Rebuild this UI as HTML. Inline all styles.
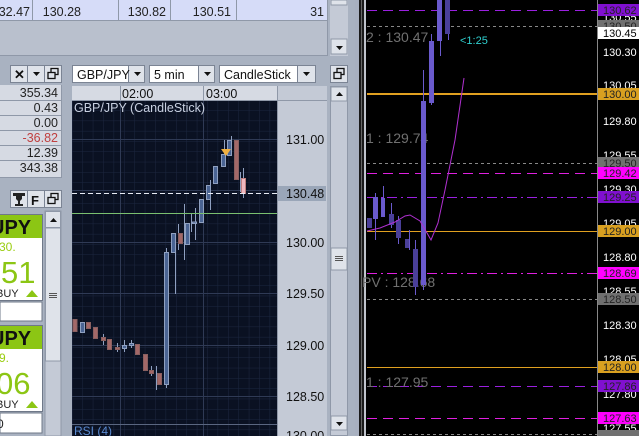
<!DOCTYPE html>
<html><head><meta charset="utf-8"><style>
html,body{margin:0;padding:0;background:#a9b2c1;width:639px;height:436px;overflow:hidden}
svg{display:block}
text{font-family:"Liberation Sans",sans-serif}
</style></head><body>
<svg width="639" height="436" viewBox="0 0 639 436" xmlns="http://www.w3.org/2000/svg">
<defs>
<pattern id="g" x="72" y="100" width="10.4" height="10.3" patternUnits="userSpaceOnUse">
<path d="M0 0H10.4M0 0V10.3" stroke="#1c2640" stroke-width="1" fill="none"/>
</pattern>
</defs>
<rect x="0" y="0" width="355" height="436" fill="#a9b2c1"/>
<rect x="0" y="0" width="327" height="56" fill="#b9c0cd"/>
<rect x="0" y="0" width="327" height="20" fill="#d6dcf8"/>
<path d="M0 20.5H327M32.5 0V20M118.5 0V20M170.5 0V20M236.5 0V20" stroke="#8f98a8"/>
<path d="M327.5 0V56M0 55.5H327" stroke="#8f98a8"/>
<g font-size="12.5" fill="#222" text-anchor="end">
<text x="30" y="16">32.47</text><text x="81" y="16">130.28</text><text x="166" y="16">130.82</text><text x="231" y="16">130.51</text><text x="324" y="16">31</text>
</g>
<rect x="330" y="0" width="18" height="56" fill="#c4cad6"/>
<rect x="331" y="39" width="16" height="15" fill="#dfe3ea" stroke="#8f98a8"/>
<rect x="331" y="0" width="16" height="5" fill="#dfe3ea" stroke="#8f98a8"/>
<path d="M336 46h7l-3.5 4z" fill="#111"/>
<g stroke="#7b8494" fill="#dfe3ea">
<rect x="10.5" y="65.5" width="17" height="17"/><rect x="27.5" y="65.5" width="17" height="17"/><rect x="44.5" y="65.5" width="17" height="17"/>
</g>
<text x="14" y="79" font-size="13" font-weight="bold" fill="#111">✕</text>
<path d="M33 72h7l-3.5 4z" fill="#111"/>
<g fill="none" stroke="#111" stroke-width="1.3"><rect x="51" y="68.5" width="7" height="6"/><rect x="48" y="72.5" width="7" height="6" fill="#dfe3ea"/></g>
<g stroke="#7b8494">
<rect x="72.5" y="65.5" width="56" height="17" fill="#fff"/><rect x="128.5" y="65.5" width="16" height="17" fill="#dfe3ea"/>
<rect x="149.5" y="65.5" width="49" height="17" fill="#fff"/><rect x="198.5" y="65.5" width="16" height="17" fill="#dfe3ea"/>
<rect x="219.5" y="65.5" width="78" height="17" fill="#fff"/><rect x="297.5" y="65.5" width="18" height="17" fill="#dfe3ea"/>
<rect x="330.5" y="65.5" width="17" height="17" fill="#dfe3ea"/>
</g>
<g font-size="12.5" fill="#111"><text x="77" y="79">GBP/JPY</text><text x="154" y="79">5 min</text><text x="224" y="79">CandleStick</text></g>
<g fill="#111"><path d="M134 72h7l-3.5 4z"/><path d="M204 72h7l-3.5 4z"/><path d="M303 72h7l-3.5 4z"/></g>
<g fill="none" stroke="#111" stroke-width="1.3"><rect x="337" y="68.5" width="7" height="6"/><rect x="334" y="72.5" width="7" height="6" fill="#dfe3ea"/></g>
<rect x="0" y="85" width="61.5" height="93" fill="#d6dae3"/>
<path d="M0 100.5H62M0 115.5H62M0 130.5H62M0 145.5H62M0 160.5H62M0 177.5H62M61.5 85V178" stroke="#8f98a8"/>
<g font-size="12.5" fill="#222" text-anchor="end">
<text x="58" y="97">355.34</text><text x="58" y="112">0.43</text><text x="58" y="127">0.00</text><text x="58" y="142" fill="#c04040">-36.82</text><text x="58" y="157">12.39</text><text x="58" y="172">343.38</text>
</g>
<g stroke="#7b8494" fill="#dfe3ea">
<rect x="10.5" y="190.5" width="17" height="17"/><rect x="27.5" y="190.5" width="17" height="17"/><rect x="44.5" y="190.5" width="17" height="17"/>
</g>
<path d="M13 193h12v3h-3v3l-2 2v3h3v2h-8v-2h3v-3l-2-2v-3h-3z" fill="#222"/>
<text x="31" y="205" font-size="13" font-weight="bold" fill="#111">F</text>
<g fill="none" stroke="#111" stroke-width="1.3"><rect x="51" y="193.5" width="7" height="6"/><rect x="48" y="197.5" width="7" height="6" fill="#dfe3ea"/></g>
<rect x="0" y="214" width="43" height="87" fill="#6f7888"/>
<rect x="0" y="215" width="42" height="23" fill="#8cc614"/>
<rect x="0" y="238" width="42" height="62" fill="#fff"/>
<rect x="0" y="302" width="42" height="19" fill="#fff" stroke="#6f7888"/>
<text x="-10" y="234" font-size="20" font-weight="bold" fill="#111">UPY</text>
<text x="-1" y="251" font-size="12" fill="#9acd10">30.</text>
<text x="1" y="283" font-size="31" fill="#8cc614">51</text>
<text x="-4" y="297" font-size="11" fill="#222">BUY</text>
<path d="M26 297l6-7 6 7z" fill="#8cc614"/>
<rect x="0" y="325" width="43" height="87" fill="#6f7888"/>
<rect x="0" y="326" width="42" height="23" fill="#8cc614"/>
<rect x="0" y="349" width="42" height="62" fill="#fff"/>
<rect x="0" y="413" width="42" height="20" fill="#fff" stroke="#6f7888"/>
<text x="-10" y="345" font-size="20" font-weight="bold" fill="#111">UPY</text>
<text x="-1" y="362" font-size="12" fill="#9acd10">9.</text>
<text x="-4" y="394" font-size="31" fill="#8cc614">06</text>
<text x="-4" y="408" font-size="11" fill="#222">BUY</text>
<path d="M26 408l6-7 6 7z" fill="#8cc614"/>
<text x="-3" y="428" font-size="12" fill="#222">0</text>
<rect x="45" y="211" width="16" height="225" fill="#c4cad6" stroke="#8f98a8"/>
<rect x="45.5" y="228" width="15" height="133" fill="#dfe3ea" stroke="#8f98a8"/>
<rect x="45.5" y="211.5" width="15" height="16" fill="#dfe3ea" stroke="#8f98a8"/>
<path d="M50 222h7l-3.5-4z" fill="#111"/>
<path d="M49 293.5h8M49 295.5h8M49 297.5h8" stroke="#555"/>
<rect x="72" y="86" width="255" height="350" fill="#c4cad6"/>
<rect x="72" y="86" width="205" height="14" fill="#d6dae3"/>
<path d="M120.5 86V100M203.5 86V100M72 100.5H327M277.5 86V436" stroke="#8f98a8"/>
<g font-size="12.5" fill="#111"><text x="122" y="98">02:00</text><text x="206" y="98">03:00</text></g>
<rect x="72" y="101" width="205" height="335" fill="#0a1122"/>
<rect x="72" y="101" width="205" height="335" fill="url(#g)"/>
<path d="M120.5 101V436M203.5 101V436M72 139.5H277M72 190.5H277M72 242.5H277M72 293.5H277M72 345.5H277M72 396.5H277" stroke="#2f3a55"/>
<path d="M72 424.5H277" stroke="#5a6680"/>
<text x="74" y="112" font-size="12.5" fill="#c8d0e0">GBP/JPY (CandleStick)</text>
<text x="74" y="435" font-size="12" fill="#5a8ad0">RSI (4)</text>
<g stroke="#8fa0c0" stroke-width="1">
<path d="M175.5 233V294M224.5 140V166M231.5 136V156M184.5 204V260M178.5 224V250M195.5 208V240M210.5 180V210M191.5 214V232M166.5 248V388M156.5 366V390M151.5 366V376M124.5 340V352M131.5 340V348M117.5 343V352M103.5 334V345M240.5 172V192M243.5 168V198"/>
</g>
<g fill="#4a6493" stroke="#8fa0c0">
<rect x="80.5" y="322.5" width="4" height="10"/><rect x="122.5" y="345.5" width="4" height="3"/><rect x="129.5" y="343.5" width="4" height="2"/>
<rect x="164.5" y="252.5" width="4" height="132"/><rect x="171.5" y="233.5" width="4" height="19"/><rect x="185.5" y="223.5" width="4" height="21"/><rect x="192.5" y="222" width="4" height="1.5"/>
<rect x="199.5" y="199.5" width="4" height="23"/><rect x="206.5" y="185.5" width="4" height="14"/><rect x="213.5" y="166.5" width="4" height="17"/><rect x="221.5" y="154.5" width="4" height="12"/><rect x="227.5" y="140.5" width="4" height="15"/>
</g>
<g fill="#a36868" stroke="#8a6060">
<rect x="73" y="319.5" width="4" height="12"/><rect x="86.5" y="322.5" width="4" height="6"/><rect x="93.5" y="327.5" width="4" height="11"/><rect x="101.5" y="337.5" width="4" height="3"/><rect x="107.5" y="339.5" width="4" height="10"/><rect x="115.5" y="347.5" width="4" height="2"/>
<rect x="135.5" y="344.5" width="4" height="10"/><rect x="143.5" y="354.5" width="4" height="16"/><rect x="149.5" y="370.5" width="4" height="3"/><rect x="157.5" y="373.5" width="4" height="11"/>
<rect x="178.5" y="233.5" width="4" height="10"/><rect x="234.5" y="140.5" width="4" height="39"/>
</g>
<rect x="241.5" y="178.5" width="4" height="15" fill="#f0b8c0" stroke="#c08080"/>
<path d="M221 149h10l-5 7z" fill="#f0b040"/>
<path d="M72 193.5H277" stroke="#e8ecf4" stroke-dasharray="5 3"/>
<path d="M72 213.5H277" stroke="#7ac070"/>
<rect x="278" y="186" width="48" height="15" fill="#9aa6b8"/>
<g font-size="12.5" fill="#111"><text x="286" y="144">131.00</text><text x="286" y="198">130.48</text><text x="286" y="247">130.00</text><text x="286" y="298">129.50</text><text x="286" y="350">129.00</text><text x="286" y="401">128.50</text><text x="286" y="440">130.00</text></g>
<rect x="330.5" y="86.5" width="17" height="349" fill="#c4cad6" stroke="#8f98a8"/>
<rect x="331" y="87" width="16" height="14" fill="#dfe3ea" stroke="#8f98a8"/>
<path d="M336 96h7l-3.5-4z" fill="#111"/>
<rect x="331" y="248" width="16" height="22" fill="#dfe3ea" stroke="#8f98a8"/>
<path d="M335 256.5h8M335 258.5h8M335 260.5h8" stroke="#555"/>
<rect x="331" y="416" width="16" height="14" fill="#dfe3ea" stroke="#8f98a8"/>
<path d="M336 422h7l-3.5 4z" fill="#111"/>
<rect x="355" y="0" width="4" height="436" fill="#a8b0c0"/>
<rect x="359" y="0" width="7" height="436" fill="#1a1a1a"/>
<rect x="361" y="0" width="1" height="436" fill="#666"/>
<rect x="364" y="0" width="2" height="436" fill="#c0c4cc"/>
<rect x="366" y="0" width="273" height="436" fill="#000"/>
<g fill="none" stroke-width="1">
<path d="M367 10.5H597" stroke="#9a20e0" stroke-dasharray="10 6"/>
<path d="M367 26.5H597" stroke="#888" stroke-dasharray="3 3"/>
<path d="M367 94H597" stroke="#e0a020" stroke-width="2"/>
<path d="M367 163.5H597" stroke="#888" stroke-dasharray="3 3"/>
<path d="M367 173.5H597" stroke="#e020e0" stroke-dasharray="10 6"/>
<path d="M367 197.5H597" stroke="#9a20e0" stroke-dasharray="10 4 2 4"/>
<path d="M367 231.5H597" stroke="#e0a020"/>
<path d="M367 273.5H597" stroke="#e020e0" stroke-dasharray="10 4 2 4"/>
<path d="M367 299.5H597" stroke="#888" stroke-dasharray="3 3"/>
<path d="M367 367.5H597" stroke="#e0a020"/>
<path d="M367 386.5H597" stroke="#9a20e0" stroke-dasharray="10 6"/>
<path d="M367 418.5H597" stroke="#e020e0" stroke-dasharray="10 6"/>
<path d="M367 434.5H597" stroke="#888" stroke-dasharray="3 3"/>
</g>
<g font-size="14" fill="#707070">
<text x="366" y="42">2 : 130.47</text><text x="366" y="143">1 : 129.74</text><text x="362" y="287">PV : 128.68</text><text x="366" y="387">1 : 127.95</text>
</g>
<text x="460" y="44" font-size="11" fill="#30d0d0">&lt;1:25</text>
<g stroke="#6a5acd">
<path d="M375.5 193V240M383.5 186V200M391.5 203V228M398.5 216V244M409.5 230V250M415.5 240V295M423.5 70V290M431.5 34V105M440.5 0V56M448.5 0V40"/>
</g>
<g fill="#6a5acd">
<rect x="367" y="218" width="5" height="10" fill="#4a3f99"/>
<rect x="373" y="197" width="5" height="22"/><rect x="381" y="198" width="4" height="19"/>
<rect x="389" y="214" width="5" height="11" fill="#4a3f99"/><rect x="396" y="220" width="5" height="18" fill="#4a3f99"/><rect x="405" y="239" width="4" height="9" fill="#4a3f99"/>
<rect x="413" y="249" width="5" height="38" fill="#4a3f99"/><rect x="421" y="101" width="5" height="184"/><rect x="429" y="41" width="5" height="62"/>
<rect x="437" y="0" width="5" height="41"/><rect x="445" y="0" width="5" height="34" fill="#4a3f99"/>
</g>
<polyline points="367,231 380,228 395,222 405,216 410,215 420,221 427,233 431,240 438,223 445,190 455,140 464,78" fill="none" stroke="#b030d0" stroke-width="1"/>
<path d="M597.5 0V436" stroke="#888"/>
<g font-size="11" fill="#fff">
<text x="603" y="56">130.30</text><text x="603" y="125">129.80</text><text x="603" y="261">128.80</text><text x="603" y="329">128.30</text><text x="603" y="398">127.80</text>
<text x="603" y="21">130.55</text><text x="603" y="89">130.05</text><text x="603" y="159">129.55</text><text x="603" y="193">129.30</text><text x="603" y="227">129.05</text><text x="603" y="295">128.55</text><text x="603" y="363">128.05</text><text x="603" y="432">127.55</text>
</g>
<g font-size="11">
<rect x="598" y="4" width="41" height="12" fill="#8010d0"/><text x="603" y="14" fill="#222">130.62</text>
<rect x="598" y="20" width="41" height="12" fill="#707070"/><text x="603" y="30" fill="#222">130.50</text>
<rect x="598" y="27" width="41" height="12" fill="#fff"/><text x="603" y="37" fill="#000">130.45</text>
<rect x="598" y="88" width="41" height="12" fill="#d9a020"/><text x="603" y="98" fill="#222">130.00</text>
<rect x="598" y="157" width="41" height="12" fill="#707070"/><text x="603" y="167" fill="#222">129.50</text>
<rect x="598" y="167" width="41" height="12" fill="#ff00ff"/><text x="603" y="177" fill="#222">129.42</text>
<rect x="598" y="191" width="41" height="12" fill="#8010d0"/><text x="603" y="201" fill="#222">129.25</text>
<rect x="598" y="225" width="41" height="12" fill="#d9a020"/><text x="603" y="235" fill="#222">129.00</text>
<rect x="598" y="267" width="41" height="12" fill="#ff00ff"/><text x="603" y="277" fill="#222">128.69</text>
<rect x="598" y="293" width="41" height="12" fill="#707070"/><text x="603" y="303" fill="#222">128.50</text>
<rect x="598" y="361" width="41" height="12" fill="#d9a020"/><text x="603" y="371" fill="#222">128.00</text>
<rect x="598" y="380" width="41" height="12" fill="#8010d0"/><text x="603" y="390" fill="#222">127.86</text>
<rect x="598" y="412" width="41" height="12" fill="#ff00ff"/><text x="603" y="422" fill="#222">127.63</text>
<rect x="598" y="430" width="41" height="6" fill="#707070"/>
</g>
</svg>
</body></html>
